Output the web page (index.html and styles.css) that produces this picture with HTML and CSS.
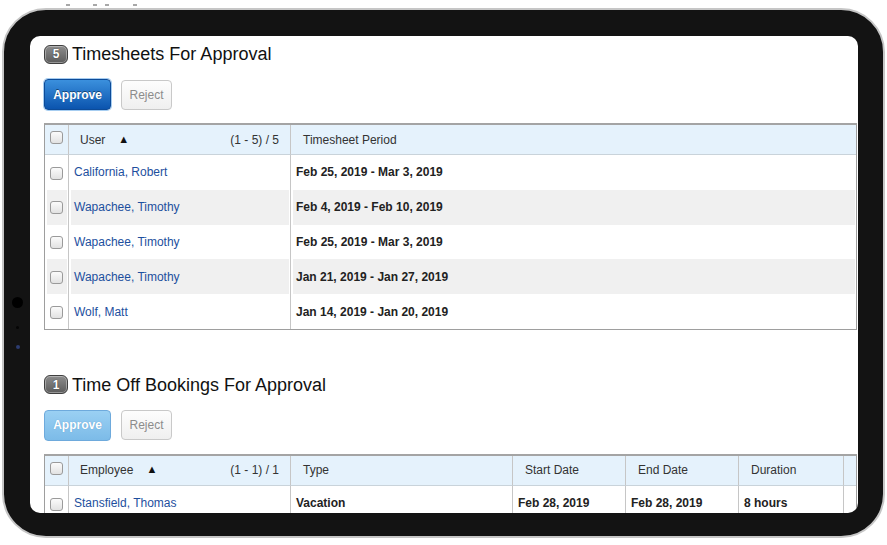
FILE: index.html
```html
<!DOCTYPE html>
<html lang="en">
<head>
<meta charset="utf-8">
<title>Approvals</title>
<link rel="stylesheet" href="styles.css">
</head>
<body>
<div class="device">
  <span class="top-btn b1"></span><span class="top-btn b2"></span><span class="top-btn b3"></span><span class="top-btn b4"></span>
  <span class="cam"></span><span class="sensor"></span><span class="led"></span>
  <div class="screen">
    <section class="section">
      <div class="title-row"><span class="badge">5</span><h2 class="title">Timesheets For Approval</h2></div>
      <div class="btn-row">
        <button class="btn-approve">Approve</button>
        <button class="btn-reject">Reject</button>
      </div>
      <table class="grid">
        <colgroup><col class="c-cb"><col class="c-name"><col></colgroup>
        <thead>
          <tr>
            <th class="cb"><span class="chk"></span></th>
            <th class="first"><div class="hcell"><span>User<span class="sort">▲</span></span><span class="count">(1 - 5) / 5</span></div></th>
            <th>Timesheet Period</th>
          </tr>
        </thead>
        <tbody>
          <tr><td class="cb"><span class="chk"></span></td><td><a class="lnk">California, Robert</a></td><td class="b">Feb 25, 2019 - Mar 3, 2019</td></tr>
          <tr class="alt"><td class="cb"><span class="chk"></span></td><td><a class="lnk">Wapachee, Timothy</a></td><td class="b">Feb 4, 2019 - Feb 10, 2019</td></tr>
          <tr><td class="cb"><span class="chk"></span></td><td><a class="lnk">Wapachee, Timothy</a></td><td class="b">Feb 25, 2019 - Mar 3, 2019</td></tr>
          <tr class="alt"><td class="cb"><span class="chk"></span></td><td><a class="lnk">Wapachee, Timothy</a></td><td class="b">Jan 21, 2019 - Jan 27, 2019</td></tr>
          <tr><td class="cb"><span class="chk"></span></td><td><a class="lnk">Wolf, Matt</a></td><td class="b">Jan 14, 2019 - Jan 20, 2019</td></tr>
        </tbody>
      </table>
    </section>
    <section class="section second">
      <div class="title-row"><span class="badge">1</span><h2 class="title">Time Off Bookings For Approval</h2></div>
      <div class="btn-row">
        <button class="btn-approve disabled">Approve</button>
        <button class="btn-reject">Reject</button>
      </div>
      <table class="grid">
        <colgroup><col class="c-cb"><col class="c-name"><col class="c-name"><col class="c-date"><col class="c-date"><col class="c-dur"><col></colgroup>
        <thead>
          <tr>
            <th class="cb"><span class="chk"></span></th>
            <th class="first"><div class="hcell"><span>Employee<span class="sort">▲</span></span><span class="count">(1 - 1) / 1</span></div></th>
            <th>Type</th>
            <th>Start Date</th>
            <th>End Date</th>
            <th>Duration</th>
            <th></th>
          </tr>
        </thead>
        <tbody>
          <tr><td class="cb"><span class="chk"></span></td><td><a class="lnk">Stansfield, Thomas</a></td><td class="b">Vacation</td><td class="b">Feb 28, 2019</td><td class="b">Feb 28, 2019</td><td class="b">8 hours</td><td></td></tr>
        </tbody>
      </table>
    </section>
  </div>
</div>
</body>
</html>
```
FILE: styles.css
```css
html, body {
  margin: 0;
  padding: 0;
  background: #ffffff;
}
body {
  width: 887px;
  height: 545px;
  overflow: hidden;
  font-family: "Liberation Sans", Arial, sans-serif;
}
.device {
  position: relative;
  margin: 8px 0 0 2px;
  width: 883px;
  height: 530px;
  box-sizing: border-box;
  border: 2px solid #c6c6c6;
  border-radius: 44px;
  background: #131313;
  padding: 26px 25px 23px 26px;
}
.top-btn {
  position: absolute;
  top: -6px;
  height: 2px;
  background: #a8a8a8;
}
.b1 { left: 62px; width: 4px; }
.b2 { left: 89px; width: 4px; }
.b3 { left: 101px; width: 4px; }
.b4 { left: 129px; width: 4px; }
.cam {
  position: absolute;
  left: 8px;
  top: 287px;
  width: 11px;
  height: 11px;
  border-radius: 50%;
  background: #000;
}
.sensor {
  position: absolute;
  left: 12px;
  top: 316px;
  width: 3px;
  height: 3px;
  border-radius: 50%;
  background: #050505;
}
.led {
  position: absolute;
  left: 12px;
  top: 335px;
  width: 4px;
  height: 4px;
  border-radius: 50%;
  background: #2c3c70;
}
.screen {
  width: 828px;
  height: 477px;
  box-sizing: border-box;
  background: #fff;
  border-radius: 10px;
  overflow: hidden;
  padding: 6px 0 0 14px;
}
.second {
  margin-top: 43px;
}
.title-row {
  display: flex;
  align-items: center;
  gap: 4px;
  height: 24px;
}
.badge {
  display: flex;
  align-items: center;
  justify-content: center;
  width: 24px;
  height: 19px;
  box-sizing: border-box;
  border: 1px solid #3f3f3f;
  border-radius: 6px;
  background: linear-gradient(#8c8c8c, #5c5c5c);
  box-shadow: inset 0 0 0 1px rgba(255,255,255,0.35);
  color: #fff;
  font-size: 12px;
  font-weight: bold;
  text-shadow: 0 0 1px #222;
}
.title {
  margin: 0;
  font-size: 18px;
  font-weight: normal;
  line-height: 24px;
  color: #111;
}
.btn-row {
  display: flex;
  align-items: center;
  gap: 10px;
  margin-top: 13px;
}
.btn-approve {
  width: 67px;
  height: 31px;
  box-sizing: border-box;
  border: 1px solid #0d4b98;
  border-radius: 4px;
  background: linear-gradient(#3b90dd, #0b54ae);
  box-shadow: 0 0 0 1px #a6cdf1;
  color: #fff;
  font-family: "Liberation Sans", Arial, sans-serif;
  font-size: 12px;
  font-weight: bold;
  text-shadow: 0 -1px 0 rgba(0,0,0,0.45);
  padding: 0;
}
.btn-approve.disabled {
  border-color: #6eaadc;
  background: linear-gradient(#9ad0f3, #7cbbe8);
  box-shadow: none;
  text-shadow: 0 0 1px rgba(60,120,180,0.6);
}
.btn-reject {
  width: 51px;
  height: 30px;
  box-sizing: border-box;
  border: 1px solid #c9c9c9;
  border-radius: 4px;
  background: linear-gradient(#fdfdfd, #efefef);
  color: #8c8c8c;
  font-family: "Liberation Sans", Arial, sans-serif;
  font-size: 12px;
  padding: 0;
}
.grid {
  margin-top: 13px;
  width: 813px;
  table-layout: fixed;
  border-collapse: separate;
  border-spacing: 0;
  border: 1px solid #9e9e9e;
  border-top: 2px solid #a4a4a4;
  font-size: 12px;
}
.c-cb { width: 23px; }
.c-name { width: 222px; }
.c-date { width: 113px; }
.c-dur { width: 105px; }
.grid th {
  height: 29px;
  padding: 0 11px 0 12px;
  background: #e5f2fc;
  border-bottom: 1px solid #c9d3da;
  font-weight: normal;
  text-align: left;
  color: #333;
  white-space: nowrap;
  overflow: hidden;
}
.grid th.first {
  padding-left: 11px;
}
.grid th + th,
.grid td + td {
  border-left: 1px solid #c6c6c6;
}
.grid td {
  height: 34.8px;
  padding: 0 5px;
  white-space: nowrap;
  overflow: hidden;
  color: #222;
}
.grid th.cb,
.grid td.cb {
  padding: 0;
  text-align: center;
}
.grid th.cb {
  vertical-align: top;
  padding-top: 5px;
  height: 24px;
}
.grid tr.alt td {
  background: #f0f0f0;
  box-shadow: inset 2px 0 0 #fff, inset -1px 0 0 #fff;
}
.hcell {
  display: flex;
  justify-content: space-between;
  align-items: center;
}
.sort {
  margin-left: 13px;
  font-size: 11px;
  color: #111;
  position: relative;
  top: -1px;
}
.count {
  color: #333;
}
.chk {
  display: inline-block;
  width: 13px;
  height: 13px;
  box-sizing: border-box;
  border: 1px solid #9a9a9a;
  border-radius: 3px;
  background: linear-gradient(#fbfbfb, #e2e2e2);
  vertical-align: middle;
}
.lnk {
  color: #1d4f9e;
  text-decoration: none;
}
.b {
  font-weight: bold;
}
```
